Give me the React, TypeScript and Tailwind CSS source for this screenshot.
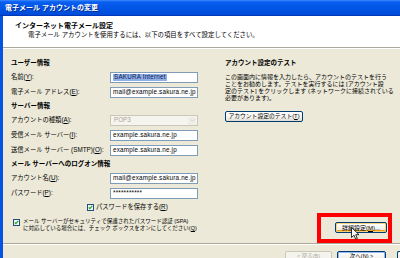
import React from 'react';

const FONT = "font-['Liberation_Sans','Noto_Sans_CJK_JP',sans-serif]";

function Key({ k }: { k: string }) {
  return <span className="underline">{k}</span>;
}

function TextBox({ value, selected }: { value: string; selected?: boolean }) {
  return (
    <div className="flex h-[11px] w-[88px] items-center overflow-hidden border border-[#7f9db9] bg-white pl-[2px] text-[6.3px] leading-none tracking-[0.2px] text-black">
      <span className={selected ? "whitespace-nowrap bg-[#8fb0e4] px-[1px] text-[#10205a]" : "whitespace-nowrap"}>{value}</span>
    </div>
  );
}

function Row({ label, children }: { label: React.ReactNode; children: React.ReactNode }) {
  return (
    <div className="flex h-[15px] items-center">
      <span className="w-[99px] whitespace-nowrap text-[6.3px] leading-none">{label}</span>
      {children}
    </div>
  );
}

function Heading({ children }: { children: React.ReactNode }) {
  return <div className="flex h-[13px] items-center text-[6.5px] font-bold leading-none">{children}</div>;
}

function Check() {
  return (
    <span className="flex h-[7px] w-[7px] shrink-0 items-center justify-center border border-[#1c5180] bg-[#f4f4f0]">
      <svg viewBox="0 0 7 7" className="h-[5px] w-[5px]">
        <path d="M1 3.4l1.6 1.7L6 1.3" stroke="#21a121" strokeWidth="1.5" fill="none" />
      </svg>
    </span>
  );
}

function XpButton({ children, className = "" }: { children: React.ReactNode; className?: string }) {
  return (
    <div
      className={
        "flex h-[11px] items-center justify-center whitespace-nowrap rounded-[2px] border border-[#003c74] bg-[linear-gradient(180deg,#ffffff_0%,#f3f2ee_60%,#dedbd0_100%)] leading-none text-black " +
        className
      }
    >
      {children}
    </div>
  );
}

export default function App() {
  return (
    <div className={"relative flex h-[258px] w-[400px] flex-col overflow-hidden bg-[#ece9d8] text-black " + FONT}>
      {/* title bar */}
      <div className="flex h-[16px] shrink-0 items-center border-b border-[#0037b8] bg-[linear-gradient(180deg,#3d8cff_0%,#0a5ff0_12%,#0055e5_55%,#004bd8_100%)] pl-[5px]">
        <span className="text-[7px] font-bold leading-none text-white [text-shadow:1px_1px_0_#0a2a8a]">
          電子メール アカウントの変更
        </span>
      </div>

      <div className="flex min-h-0 flex-1">
        <div className="w-[3px] shrink-0 bg-[#0553e1]" />

        <div className="flex min-w-0 flex-1 flex-col">
          {/* header */}
          <div className="flex h-[32px] shrink-0 flex-col border-b border-[#aca899] bg-white pl-[12px] pt-[5px] shadow-[0_1px_0_#ffffff]">
            <div className="text-[7px] font-bold leading-[9px]">インターネット電子メール設定</div>
            <div className="pl-[13px] text-[6.4px] leading-[9px]">
              電子メール アカウントを使用するには、以下の項目をすべて設定してください。
            </div>
          </div>

          {/* body */}
          <div className="flex flex-1 pl-[8px] pt-[9px]">
            <div className="flex w-[187px] shrink-0 flex-col">
              <Heading>ユーザー情報</Heading>
              <Row label={<>名前(<Key k="Y" />):</>}>
                <TextBox value="SAKURA Internet" selected />
              </Row>
              <Row label={<>電子メール アドレス(<Key k="E" />):</>}>
                <TextBox value="mail@example.sakura.ne.jp" />
              </Row>
              <Heading>サーバー情報</Heading>
              <Row label={<>アカウントの種類(<Key k="A" />):</>}>
                <div className="flex h-[11px] w-[88px] items-center justify-between border border-[#c9c7ba] bg-[#f5f4ee] pl-[3px] pr-[1px] text-[6.3px] leading-none text-[#aca899]">
                  POP3
                  <span className="flex h-[8px] w-[8px] items-center justify-center rounded-[1px] bg-[#efeee7]">
                    <svg viewBox="0 0 6 4" className="h-[3px] w-[5px]">
                      <path d="M0.5 0.5L3 3L5.5 0.5" stroke="#c9c7ba" strokeWidth="1" fill="none" />
                    </svg>
                  </span>
                </div>
              </Row>
              <Row label={<>受信メール サーバー(<Key k="I" />):</>}>
                <TextBox value="example.sakura.ne.jp" />
              </Row>
              <Row label={<>送信メール サーバー (SMTP)(<Key k="O" />):</>}>
                <TextBox value="example.sakura.ne.jp" />
              </Row>
              <Heading>メール サーバーへのログオン情報</Heading>
              <Row label={<>アカウント名(<Key k="U" />):</>}>
                <TextBox value="mail@example.sakura.ne.jp" />
              </Row>
              <Row label={<>パスワード(<Key k="P" />):</>}>
                <TextBox value="***********" />
              </Row>
              <div className="flex h-[12px] items-center gap-[2px] pl-[76px] text-[6.3px] leading-none">
                <Check />
                <span className="whitespace-nowrap">
                  パスワードを保存する(<Key k="R" />)
                </span>
              </div>
              <div className="mt-[5px] flex items-start gap-[3px] pl-[2px]">
                <div className="pt-[1px]">
                  <Check />
                </div>
                <div className="whitespace-nowrap text-[5.5px] leading-[7px]">
                  メール サーバーがセキュリティで保護されたパスワード認証 (SPA)
                  <br />
                  に対応している場合には、チェック ボックスをオンにしてください(<Key k="Q" />)
                </div>
              </div>
            </div>

            <div className="ml-[27px] flex flex-1 flex-col pb-[10px]">
              <Heading>アカウント設定のテスト</Heading>
              <div className="mt-[4px] whitespace-nowrap text-[6px] leading-[7px]">
                この画面内に情報を入力したら、アカウントのテストを行う
                <br />
                ことをお勧めします。テストを実行するには [アカウント設
                <br />
                定のテスト] をクリックします (ネットワークに接続されている
                <br />
                必要があります)。
              </div>
              <XpButton className="mt-[9px] w-[78px] text-[5.8px]">
                アカウント設定のテスト(<Key k="T" />)
              </XpButton>
              <div className="mt-auto flex justify-end pr-[13px]">
                <XpButton className="w-[52px] text-[6px] shadow-[inset_0_0_0_1px_#fbd27a,inset_0_-1px_0_1px_#e5a01a]">
                  詳細設定(<Key k="M" />)...
                </XpButton>
              </div>
            </div>
          </div>

          {/* footer */}
          <div className="flex h-[15px] shrink-0 gap-[5px] border-t border-[#aca899] pl-[282px] pt-[7px] shadow-[inset_0_1px_0_#ffffff]">
            <div className="flex h-[12px] w-[47px] shrink-0 items-start justify-center rounded-[2px] border border-[#c9c7ba] bg-[#f4f3ee] pt-[2px] text-[5.5px] leading-none text-[#aca899]">
              &lt; 戻る(B)
            </div>
            <XpButton className="h-[12px] w-[49px] shrink-0 !items-start pt-[2px] text-[5.5px] shadow-[inset_0_0_0_1px_#98b8f0]">
              次へ(<Key k="N" />) &gt;
            </XpButton>
            <div className="ml-[6px] h-[12px] w-[10px] shrink-0 rounded-l-[2px] border-y border-l border-[#003c74] bg-[linear-gradient(180deg,#ffffff_0%,#f3f2ee_60%,#dedbd0_100%)]" />
          </div>
        </div>
      </div>

      {/* highlight box */}
      <div className="absolute left-[317px] top-[213px] h-[30px] w-[75px] border-[4px] border-[#ff0000]" />

      {/* mouse cursor */}
      <svg className="absolute left-[351px] top-[227px] h-[13px] w-[9px]" viewBox="0 0 9 13">
        <path d="M0.5 0.5V10.5L3 8.2L4.7 12.2L6.3 11.5L4.7 7.7H8Z" fill="#ffffff" stroke="#000000" strokeWidth="0.8" strokeLinejoin="round" />
      </svg>
    </div>
  );
}
